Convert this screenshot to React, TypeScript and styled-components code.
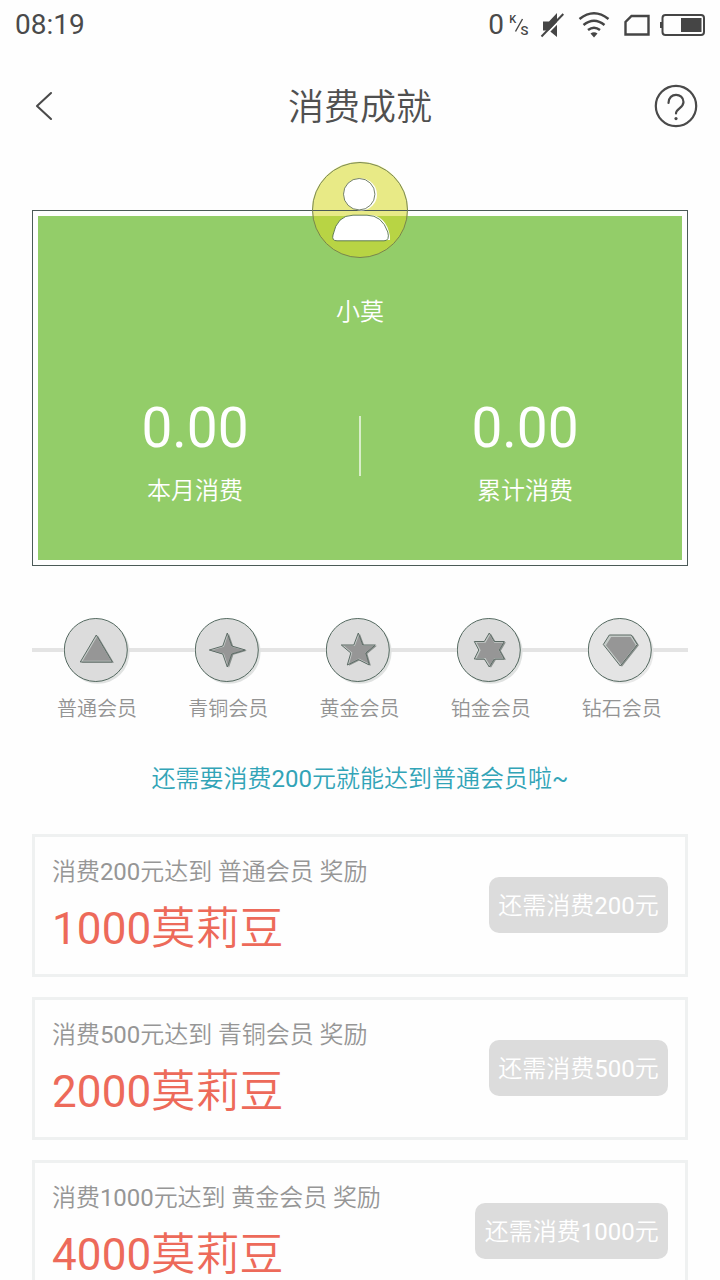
import React from 'react';
import styled, { createGlobalStyle } from 'styled-components';

const GlobalStyle = createGlobalStyle`
  * { box-sizing: border-box; }
  body {
    margin: 0;
    background: #fff;
    font-family: Roboto, "Noto Sans CJK SC", sans-serif;
    font-weight: 350;
    color: #4a4a4a;
  }
`;

const Screen = styled.div`
  width: 720px;
  height: 1280px;
  overflow: hidden;
  background: #fefefe;
`;

const StatusBar = styled.div`
  height: 50px;
  padding: 0 15px;
  display: flex;
  align-items: center;
  justify-content: space-between;
  font-size: 28px;
  font-weight: 400;
  line-height: 50px;
`;

const StatusIcons = styled.div`
  display: flex;
  align-items: center;
  height: 50px;
`;

const Speed = styled.span`
  font-size: 28px;
  margin-right: 4px;
`;

const GlyphBox = styled.div`
  height: 50px;
  margin-right: -3px;
  display: flex;
`;

const NavBar = styled.header`
  height: 112px;
  padding: 0 22px 0 34px;
  display: grid;
  grid-template-columns: 44px 1fr 44px;
  align-items: center;
`;

const Title = styled.h1`
  margin: 4px 0 0 -12px;
  font-size: 36px;
  font-weight: 350;
  line-height: 52px;
  text-align: center;
  color: #505050;
`;

const SummaryFrame = styled.section`
  margin: 48px 32px 0;
  height: 356px;
  border: 1px solid #4b5a57;
  padding: 5px;
`;

const Summary = styled.div`
  position: relative;
  height: 344px;
  background: #93cd69;
  color: #fff;
  display: flex;
  flex-direction: column;
  align-items: center;
`;

const Avatar = styled.svg`
  position: absolute;
  top: -55px;
  left: 273px;
`;

const UserName = styled.div`
  margin-top: 78px;
  font-size: 24px;
  line-height: 36px;
`;

const Totals = styled.div`
  width: 100%;
  margin-top: 65px;
  display: grid;
  grid-template-columns: 314px 1fr 314px;
`;

const Total = styled.div`
  text-align: center;
`;

const Amount = styled.div`
  font-size: 55px;
  font-weight: 400;
  line-height: 66px;
`;

const TotalLabel = styled.div`
  margin-top: 12px;
  font-size: 24px;
  line-height: 36px;
`;

const Divider = styled.div`
  width: 2px;
  height: 60px;
  margin: 21px auto 0;
  background: #d9eec9;
`;

const Levels = styled.section`
  margin: 52px 32px 0;
  height: 108px;
  display: grid;
  grid-template-columns: repeat(5, 131.2px);
  background: linear-gradient(#e4e4e4, #e4e4e4) 0 30px / 656px 4px no-repeat;
`;

const Level = styled.div`
  display: flex;
  flex-direction: column;
  align-items: center;
`;

const LevelName = styled.div`
  margin: 8px 1px 0 0;
  font-size: 20px;
  line-height: 30px;
  color: #939393;
`;

const Hint = styled.p`
  margin: 35px 0 0;
  height: 36px;
  font-size: 24px;
  line-height: 36px;
  text-align: center;
  color: #32a4b7;
`;

const Rewards = styled.section`
  margin: 37px 32px 0;
  display: flex;
  flex-direction: column;
  gap: 20px;
`;

const RewardCard = styled.article`
  height: 143px;
  border: 3px solid #eff1f1;
  padding: 0 17px;
  display: flex;
  align-items: center;
  justify-content: space-between;
`;

const Offer = styled.div`
  padding-top: 4px;
`;

const Condition = styled.div`
  font-size: 24px;
  line-height: 36px;
  letter-spacing: -0.05px;
  color: #969696;
`;

const Prize = styled.div`
  margin-top: 6px;
  font-size: 44px;
  line-height: 66px;
  letter-spacing: 0.1px;
  color: #ed6a5a;
`;

const Remaining = styled.button`
  height: 56px;
  margin-bottom: 2px;
  padding: 3px 9.3px 0;
  border: 0;
  border-radius: 10px;
  background: #dcdcdc;
  color: #fff;
  font: 350 24px/53px Roboto, "Noto Sans CJK SC", sans-serif;
`;

const Digits = styled.span`
  font-weight: 400;
`;

const withDigits = (text: string) =>
  text.split(/(\d+|~)/).map((part, i) => (/^(\d+|~)$/.test(part) ? <Digits key={i}>{part}</Digits> : part));

const levels = [
  { name: '普通会员', points: '33,18 49,45 17,45' },
  { name: '青铜会员', points: '33,16 37.5,29 51,33 37.5,37 33,50 28.5,37 15,33 28.5,29' },
  { name: '黄金会员', points: '33,16 37.5,28 50,28 40.5,36 44,48 33,42.5 22,48 25.5,36 16,28 28.5,28' },
  { name: '铂金会员', points: '33,16 38,24.5 48,24.5 43,33 48,42 38,42 33,50 28,42 18,42 22.5,33 18,24.5 28,24.5' },
  { name: '钻石会员', points: '22,18 44,18 50,27.5 33,49 16,27.5' },
];

const rewards = [
  { spend: 200, level: '普通会员', prize: 1000 },
  { spend: 500, level: '青铜会员', prize: 2000 },
  { spend: 1000, level: '黄金会员', prize: 4000 },
];

const LevelBadge = ({ points, light }: { points: string; light: boolean }) => (
  <svg width="68" height="68" viewBox="0.7 0 68 68">
    <circle cx="34.5" cy="34" r="31.8" fill={light ? '#e8e8e8' : '#e0e2e1'} />
    <circle cx="32.5" cy="32" r="31.5" fill={light ? '#e4e4e4' : '#dcdcdc'} />
    <path d="M3 43A31 31 0 0 1 44 3" fill="none" stroke="#f8f8f8" strokeWidth="1.2" />
    <circle cx="32.5" cy="32" r="31.5" fill="none" stroke="#53685f" strokeWidth="1" />
    <g transform="translate(0 -1)">
      <polygon points={points} fill="#8a908d" transform="translate(1.6 .8)" />
      <polygon points={points} fill="#c4cac7" />
      <polygon points={points} fill="#969696" transform="translate(33.6 33.2) scale(.88) translate(-33 -33)" />
      <polygon points={points} fill="none" stroke="#5c6b65" strokeWidth="1" />
    </g>
  </svg>
);

const StatusGlyphs = () => (
  <svg width="200" height="50" viewBox="508 0 200 50" fill="none" stroke="#454545">
    <g fill="#454545" stroke="none" fontFamily="Roboto" fontWeight="500">
      <text x="509.3" y="23" fontSize="11">K</text>
      <text x="520.5" y="35" fontSize="13">S</text>
    </g>
    <path d="M515.5 31.5L522.5 19" strokeWidth="1.4" />
    <path d="M543 21.5H549L557 13V37L549 30.5H543Z" fill="#454545" stroke="none" />
    <path d="M544.2 36.5L565.2 15" stroke="#fefefe" strokeWidth="1.8" />
    <path d="M541.5 36.5L563.3 14" strokeWidth="2" />
    <path d="M579.5 19Q594 7.5 608.5 19M583.5 25Q594 16.5 604.5 25M588 30Q594 25.5 600 30" strokeWidth="2.5" />
    <path d="M590.5 33.5Q594 31 597.5 33.5L594 37.5Z" fill="#454545" stroke="none" />
    <path d="M631.5 16H648.5V34.5H625.5V22Z" strokeWidth="2.4" />
    <rect x="662.5" y="15" width="41.5" height="20" rx="3" strokeWidth="2" />
    <path d="M661 22V28" strokeWidth="2" />
    <rect x="681" y="18" width="20.5" height="14" fill="#454545" stroke="none" />
  </svg>
);

export default function App() {
  return (
    <Screen>
      <GlobalStyle />
      <StatusBar>
        <span>08:19</span>
        <StatusIcons>
          <Speed>0</Speed>
          <GlyphBox><StatusGlyphs /></GlyphBox>
        </StatusIcons>
      </StatusBar>
      <NavBar>
        <svg width="44" height="44" viewBox="0 0 44 44" fill="none" stroke="#4a4a4a" strokeWidth="2.1" strokeLinecap="round" strokeLinejoin="round">
          <path d="M17 9L3 22L17 35" />
        </svg>
        <Title>消费成就</Title>
        <svg width="44" height="44" viewBox="0 0 44 44" fill="none" stroke="#4a4a4a" strokeWidth="2.2" strokeLinecap="round">
          <circle cx="22" cy="22" r="20.2" />
          <path d="M14.5 19C14.5 8 29.5 8.5 29.5 18C29.5 24 22 24.5 22 29.5" />
          <circle cx="22" cy="34.6" r="1.6" fill="#4a4a4a" stroke="none" />
        </svg>
      </NavBar>
      <SummaryFrame>
        <Summary>
          <Avatar width="98" height="98" viewBox="0 0 98 98">
            <path d="M1.4 55A48 48 0 1 1 96.6 55Z" fill="#e8ea86" />
            <path d="M1.4 55A48 48 0 0 0 96.6 55Z" fill="#b8d444" />
            <path d="M1.3 49.5H96.7" stroke="#4b5a57" />
            <circle cx="49" cy="49" r="47.5" fill="none" stroke="#6c7c52" strokeWidth="0.9" />
            <circle cx="50" cy="33.5" r="16" fill="#fff" />
            <circle cx="48.2" cy="33.2" r="15.7" fill="#fff" stroke="#65745a" strokeWidth="0.9" />
            <path d="M41 54Q26 58 24 79H79V75Q75 54 58 54Z" fill="#fff" />
            <path d="M42 54.2H56Q71 54.2 76.8 71Q79 79.8 73 79.8H26Q20.5 79.8 22 74Q26 54.2 42 54.2Z" fill="#fff" stroke="#52704b" strokeWidth="0.9" />
          </Avatar>
          <UserName>小莫</UserName>
          <Totals>
            <Total>
              <Amount>0.00</Amount>
              <TotalLabel>本月消费</TotalLabel>
            </Total>
            <Divider />
            <Total>
              <Amount>0.00</Amount>
              <TotalLabel>累计消费</TotalLabel>
            </Total>
          </Totals>
        </Summary>
      </SummaryFrame>
      <Levels>
        {levels.map((level, i) => (
          <Level key={level.name}>
            <LevelBadge points={level.points} light={i === 4} />
            <LevelName>{level.name}</LevelName>
          </Level>
        ))}
      </Levels>
      <Hint>{withDigits('还需要消费200元就能达到普通会员啦~')}</Hint>
      <Rewards>
        {rewards.map(({ spend, level, prize }) => (
          <RewardCard key={spend}>
            <Offer>
              <Condition>{withDigits(`消费${spend}元达到 ${level} 奖励`)}</Condition>
              <Prize>{withDigits(`${prize}莫莉豆`)}</Prize>
            </Offer>
            <Remaining>{withDigits(`还需消费${spend}元`)}</Remaining>
          </RewardCard>
        ))}
      </Rewards>
    </Screen>
  );
}
